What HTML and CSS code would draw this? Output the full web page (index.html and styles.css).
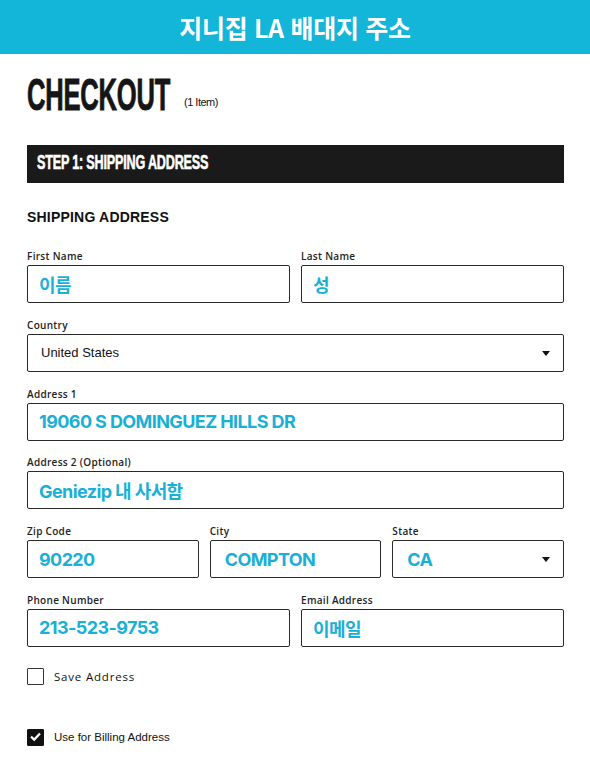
FILE: index.html
```html
<!DOCTYPE html>
<html lang="ko">
<head>
<meta charset="utf-8">
<title>Checkout</title>
<link rel="stylesheet" href="styles.css">
</head>
<body>
<header class="banner">지니집 LA 배대지 주소</header>
<main class="page">
  <div class="title-row">
    <h1 class="title"><span class="cond cond-title">CHECKOUT</span></h1>
    <span class="count">(1 Item)</span>
  </div>
  <div class="step-bar"><span class="cond cond-step">STEP 1: SHIPPING ADDRESS</span></div>
  <h2 class="section">SHIPPING ADDRESS</h2>

  <div class="row two">
    <div class="field"><label>First Name</label><div class="box"><span class="val">이름</span></div></div>
    <div class="field"><label>Last Name</label><div class="box"><span class="val">성</span></div></div>
  </div>
  <div class="row">
    <div class="field"><label>Country</label><div class="box select"><span class="plain">United States</span><span class="caret"></span></div></div>
  </div>
  <div class="row">
    <div class="field"><label>Address 1</label><div class="box"><span class="val">19060 S DOMINGUEZ HILLS DR</span></div></div>
  </div>
  <div class="row">
    <div class="field"><label>Address 2 (Optional)</label><div class="box"><span class="val">Geniezip 내 사서함</span></div></div>
  </div>
  <div class="row three">
    <div class="field"><label>Zip Code</label><div class="box"><span class="val">90220</span></div></div>
    <div class="field"><label>City</label><div class="box wide-pad"><span class="val">COMPTON</span></div></div>
    <div class="field"><label>State</label><div class="box select wide-pad"><span class="val">CA</span><span class="caret"></span></div></div>
  </div>
  <div class="row two">
    <div class="field"><label>Phone Number</label><div class="box"><span class="val">213-523-9753</span></div></div>
    <div class="field"><label>Email Address</label><div class="box"><span class="val">이메일</span></div></div>
  </div>

  <div class="check-row save"><span class="checkbox"></span><span class="check-label spaced">Save Address</span></div>
  <div class="check-row billing"><span class="checkbox checked"><svg viewBox="0 0 17 17" width="17" height="17"><path d="M4 8.6 L7.2 11.6 L13 5.4" fill="none" stroke="#fff" stroke-width="2.2"/></svg></span><span class="check-label">Use for Billing Address</span></div>
</main>
</body>
</html>
```

FILE: styles.css
```css
* { box-sizing: border-box; margin: 0; padding: 0; }
body {
  background: #fff;
  font-family: "Liberation Sans", Arial, sans-serif;
  color: #1a1a1a;
  width: 590px;
}
.banner {
  height: 54px;
  background: #13b5d8;
  color: #fff;
  font-family: "Noto Sans CJK KR", "Noto Sans", sans-serif;
  font-weight: 700;
  font-size: 25px;
  line-height: 54px;
  text-align: center;
  letter-spacing: -0.3px;
}
.page { padding: 0 26px 0 27px; }
.title-row {
  display: flex;
  align-items: flex-end;
  height: 91px;
  padding-bottom: 30px;
}
.title {
  width: 157px;
  height: 40px;
  white-space: nowrap;
  font-size: 44px;
  line-height: 40px;
  font-weight: 700;
  color: #151515;
}
.cond { display: inline-block; transform-origin: left center; white-space: nowrap; }
.cond-title { transform: scaleX(0.58); letter-spacing: -0.3px; -webkit-text-stroke: 0.9px #151515; }
.count { font-size: 11px; line-height: 11px; margin-bottom: 7px; letter-spacing: -0.5px; color: #111; }
.step-bar {
  background: #1a1a1a;
  height: 38px;
  padding-left: 10px;
  color: #fff;
  font-size: 20px;
  font-weight: 700;
  line-height: 34px;
}
.cond-step { transform: scaleX(0.63); letter-spacing: -0.3px; -webkit-text-stroke: 0.6px #fff; }
.section {
  margin-top: 25px;
  font-size: 14px;
  line-height: 18px;
  font-weight: 700;
  letter-spacing: 0.2px;
  color: #111;
  margin-bottom: 24px;
}
.row { display: flex; gap: 11px; margin-bottom: 15.8px; }
.field { flex: 1; display: flex; flex-direction: column; gap: 3px; min-width: 0; }
.field label {
  font-family: "Open Sans", sans-serif;
  font-size: 10px;
  line-height: 12px;
  font-weight: 600;
  letter-spacing: 0.3px;
  color: #222;
}
.box {
  height: 38px;
  border: 1px solid #2a2a2a;
  border-radius: 2px;
  display: flex;
  align-items: center;
  padding: 0 13px 0 11px;
}
.box.wide-pad { padding-left: 14px; }
.val {
  font-family: Inter, "Noto Sans CJK KR", sans-serif;
  font-weight: 700;
  font-size: 18px;
  letter-spacing: -0.6px;
  color: #1ab0d6;
}
.plain { font-size: 13px; color: #111; padding-left: 2px; }
.select { justify-content: space-between; }
.caret {
  width: 0; height: 0;
  border-left: 4.5px solid transparent;
  border-right: 4.5px solid transparent;
  border-top: 5px solid #111;
  margin-top: 1px;
}
.check-row { display: flex; align-items: center; gap: 10px; }
.check-row.save { margin-top: 21px; }
.check-row.billing { margin-top: 44px; }
.checkbox {
  width: 17px; height: 17px;
  border: 1.5px solid #333;
  border-radius: 1px;
  display: flex;
}
.checkbox.checked { background: #111; border-color: #111; }
.checkbox svg { margin: -1.5px; }
.check-label { font-size: 11.5px; color: #111; }
.check-label.spaced { font-family: "Open Sans", sans-serif; font-size: 11.5px; letter-spacing: 0.8px; }
```
